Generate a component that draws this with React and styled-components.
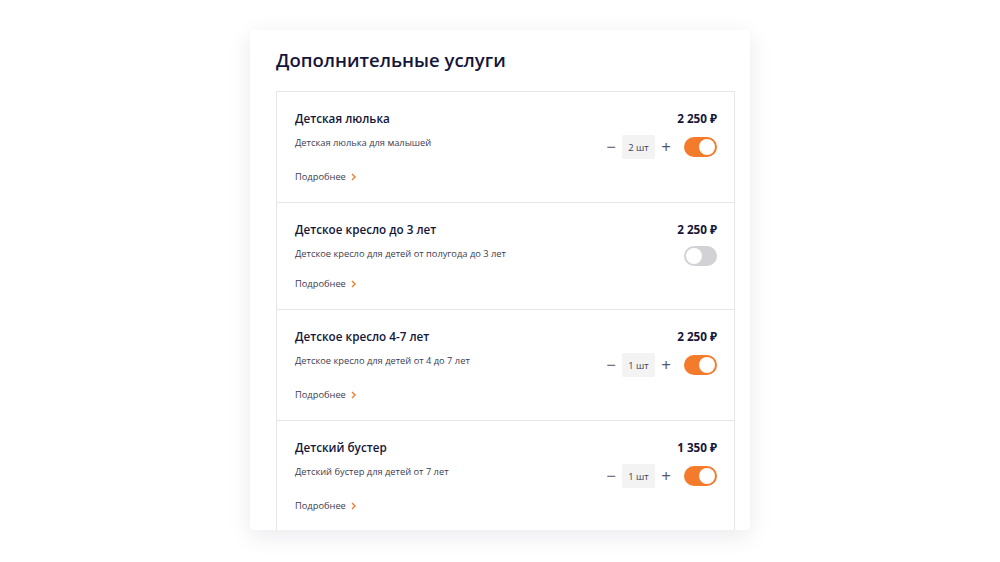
import React from 'react'
import styled, { createGlobalStyle } from 'styled-components'

const GlobalStyle = createGlobalStyle`
  body {
    margin: 0;
    background: #ffffff;
    font-family: 'Open Sans', 'Noto Sans', sans-serif;
  }
`

const Page = styled.div`
  display: flex;
  justify-content: center;
  padding-top: 30px;
  height: 562px;
  box-sizing: border-box;
`

const Card = styled.div`
  width: 500px;
  height: 500px;
  overflow: hidden;
  background: #fff;
  border-radius: 4px;
  box-shadow: 0 6px 24px rgba(20, 20, 50, 0.09);
  padding: 16px 15px 0 26px;
  box-sizing: border-box;
`

const Title = styled.h2`
  margin: 0 0 17px;
  font-size: 18.5px;
  line-height: 28px;
  font-weight: 600;
  color: #15163a;
`

const List = styled.div`
  border: 1px solid #e6e6ea;
`

const Item = styled.div`
  padding: 17px 17px 17px 18px;
  border-top: ${(p) => (p.$first ? 'none' : '1px solid #e6e6ea')};
`

const Row = styled.div`
  display: flex;
  justify-content: space-between;
  align-items: flex-start;
  margin-bottom: ${(p) => p.$gap || 0}px;
`

const Name = styled.div`
  font-size: 11.7px;
  line-height: 18px;
  font-weight: 600;
  color: #15163a;
`

const Price = styled.div`
  font-size: 11.7px;
  line-height: 18px;
  font-weight: 700;
  color: #15163a;
`

const Desc = styled.div`
  font-size: 9.3px;
  line-height: 16px;
  color: #3b3c52;
`

const Controls = styled.div`
  display: flex;
  align-items: center;
`

const StepButton = styled.span`
  width: 22px;
  text-align: center;
  font-size: 17px;
  line-height: 24px;
  color: #55566a;
  font-weight: 400;
`

const Count = styled.div`
  width: 33px;
  height: 24px;
  display: flex;
  align-items: center;
  justify-content: center;
  background: #f3f3f4;
  border-radius: 2px;
  font-size: 9.3px;
  color: #3b3c52;
`

const Toggle = styled.div`
  width: 33px;
  height: 20px;
  border-radius: 10px;
  background: ${(p) => (p.$on ? '#f47a2c' : '#d1d1d6')};
  margin-left: ${(p) => (p.$withCounter ? '7px' : '0')};
  display: flex;
  align-items: center;
  justify-content: ${(p) => (p.$on ? 'flex-end' : 'flex-start')};
  padding: 0 2px;
  box-sizing: border-box;
`

const Knob = styled.span`
  width: 16px;
  height: 16px;
  border-radius: 50%;
  background: #fff;
`

const More = styled.a`
  display: flex;
  width: fit-content;
  align-items: center;
  gap: 5px;
  font-size: 9.3px;
  line-height: 16px;
  color: #3b3c52;
  text-decoration: none;
`

const Chevron = () => (
  <svg width="5" height="8" viewBox="0 0 5 8">
    <path d="M1 1l3 3-3 3" fill="none" stroke="#f47a2c" strokeWidth="1.4" />
  </svg>
)

const services = [
  { name: 'Детская люлька', desc: 'Детская люлька для малышей', price: '2 250 ₽', count: 2, on: true },
  { name: 'Детское кресло до 3 лет', desc: 'Детское кресло для детей от полугода до 3 лет', price: '2 250 ₽', count: 0, on: false },
  { name: 'Детское кресло 4-7 лет', desc: 'Детское кресло для детей от 4 до 7 лет', price: '2 250 ₽', count: 1, on: true },
  { name: 'Детский бустер', desc: 'Детский бустер для детей от 7 лет', price: '1 350 ₽', count: 1, on: true },
]

const App = () => {
  return (
    <>
      <GlobalStyle />
      <Page>
        <Card>
          <Title>Дополнительные услуги</Title>
          <List>
            {services.map((s, i) => (
              <Item key={s.name} $first={i === 0}>
                <Row $gap={8}>
                  <Name>{s.name}</Name>
                  <Price>{s.price}</Price>
                </Row>
                <Row $gap={10}>
                  <Desc>{s.desc}</Desc>
                  <Controls>
                    {s.on && (
                      <>
                        <StepButton>−</StepButton>
                        <Count>{s.count} шт</Count>
                        <StepButton>+</StepButton>
                      </>
                    )}
                    <Toggle $on={s.on} $withCounter={s.on}>
                      <Knob />
                    </Toggle>
                  </Controls>
                </Row>
                <More href="#">
                  Подробнее
                  <Chevron />
                </More>
              </Item>
            ))}
          </List>
        </Card>
      </Page>
    </>
  )
}

export default App
